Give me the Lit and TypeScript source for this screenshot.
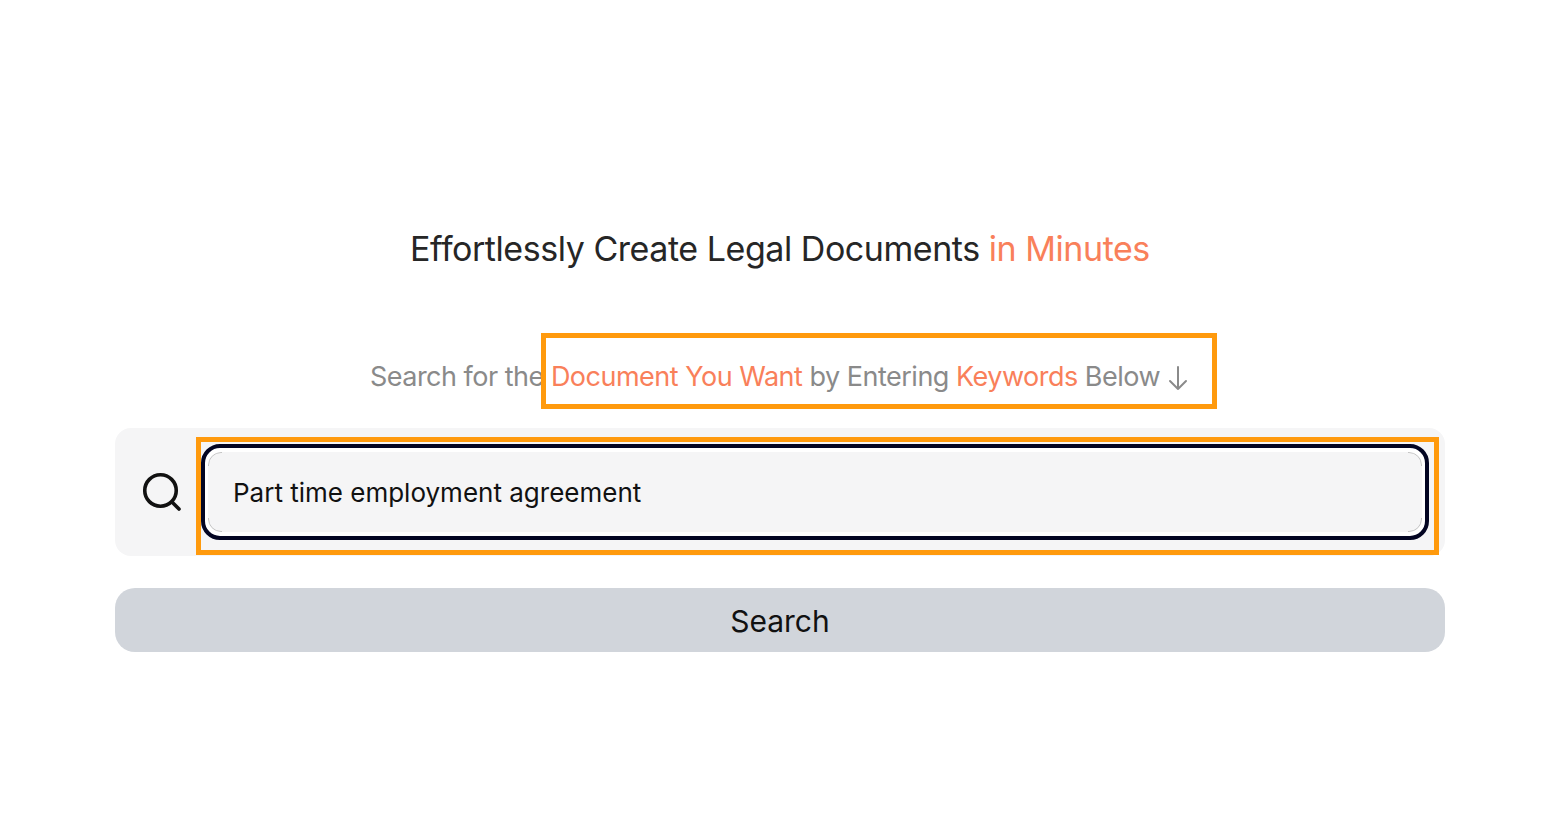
import { LitElement, html, css } from "lit";
import { customElement } from "lit/decorators.js";

@customElement("app-root")
export class AppRoot extends LitElement {
  static styles = css`
    :host { display: block; width: 1562px; height: 820px; background: #fff; font-family: Inter, "Liberation Sans", sans-serif; overflow: hidden; }
    .page { display: flex; flex-direction: column; align-items: center; padding: 228px 117px 0 115px; }
    h1 { margin: 0; font-size: 34px; line-height: 42px; font-weight: 400; color: #262626; letter-spacing: -0.45px; white-space: nowrap; }
    .accent { color: #f9805a; }
    .sub { position: relative; margin-top: 89px; font-size: 27px; line-height: 36px; color: #8a8a8a; white-space: nowrap; font-weight: 400; letter-spacing: -0.5px; }
    .hl { position: absolute; border: 5px solid #ff9a0d; box-sizing: border-box; pointer-events: none; }
    .box1 { left: 171px; top: -26px; width: 676px; height: 76px; }
    .box2 { left: 81px; top: 9px; width: 1243px; height: 118px; }
    .sub svg { vertical-align: -6px; margin-left: 6px; }
    .search { position: relative; margin-top: 33px; width: 100%; height: 128px; background: #f5f5f6; border-radius: 16px; display: flex; align-items: center; box-sizing: border-box; padding: 0 16px 0 26px; gap: 18px; }
    .search > svg { flex: none; }
    .input { flex: 1; height: 96px; box-sizing: border-box; border: 4px solid #030522; border-radius: 19px; display: flex; padding: 4px 3px; background: #fff; }
    .field { position: relative; flex: 1; display: flex; align-items: center; padding-left: 25px; border-radius: 13px; background: #f5f5f6; font-size: 26px; letter-spacing: 0; color: #111; }
    .field::before { content: ""; position: absolute; inset: 0; border: 1px solid #c4c4c4; border-radius: 13px; -webkit-mask: linear-gradient(#000 0 0) left top / 14px 14px no-repeat, linear-gradient(#000 0 0) right top / 14px 14px no-repeat, linear-gradient(#000 0 0) left bottom / 14px 14px no-repeat, linear-gradient(#000 0 0) right bottom / 14px 14px no-repeat; mask: linear-gradient(#000 0 0) left top / 14px 14px no-repeat, linear-gradient(#000 0 0) right top / 14px 14px no-repeat, linear-gradient(#000 0 0) left bottom / 14px 14px no-repeat, linear-gradient(#000 0 0) right bottom / 14px 14px no-repeat; }
    .btn { margin-top: 32px; width: 100%; height: 64px; border: 0; border-radius: 20px; background: #d1d5db; font: inherit; font-size: 30px; letter-spacing: -0.05px; color: #111; padding: 2px 0 0; }
  `;
  render() {
    return html`<div class="page">
      <h1>Effortlessly Create Legal Documents <span class="accent">in Minutes</span></h1>
      <div class="sub">Search for the <span class="accent">Document You Want</span> by Entering <span class="accent">Keywords</span> Below<svg width="24" height="28" viewBox="0 0 24 28" fill="none" stroke="#8a8a8a" stroke-width="2" stroke-linecap="round" stroke-linejoin="round"><path d="M12 3v22M4 17l8 8 8-8"/></svg>
        <div class="hl box1"></div>
      </div>
      <div class="search">
        <svg width="42" height="42" viewBox="0 0 42 42" fill="none" stroke="#111" stroke-width="3.6" stroke-linecap="round"><circle cx="19.5" cy="19.5" r="15.75"/><path d="M31 31l7 7"/></svg>
        <div class="input"><div class="field">Part time employment agreement</div></div>
        <div class="hl box2"></div>
      </div>
      <button class="btn">Search</button>
    </div>`;
  }
}
